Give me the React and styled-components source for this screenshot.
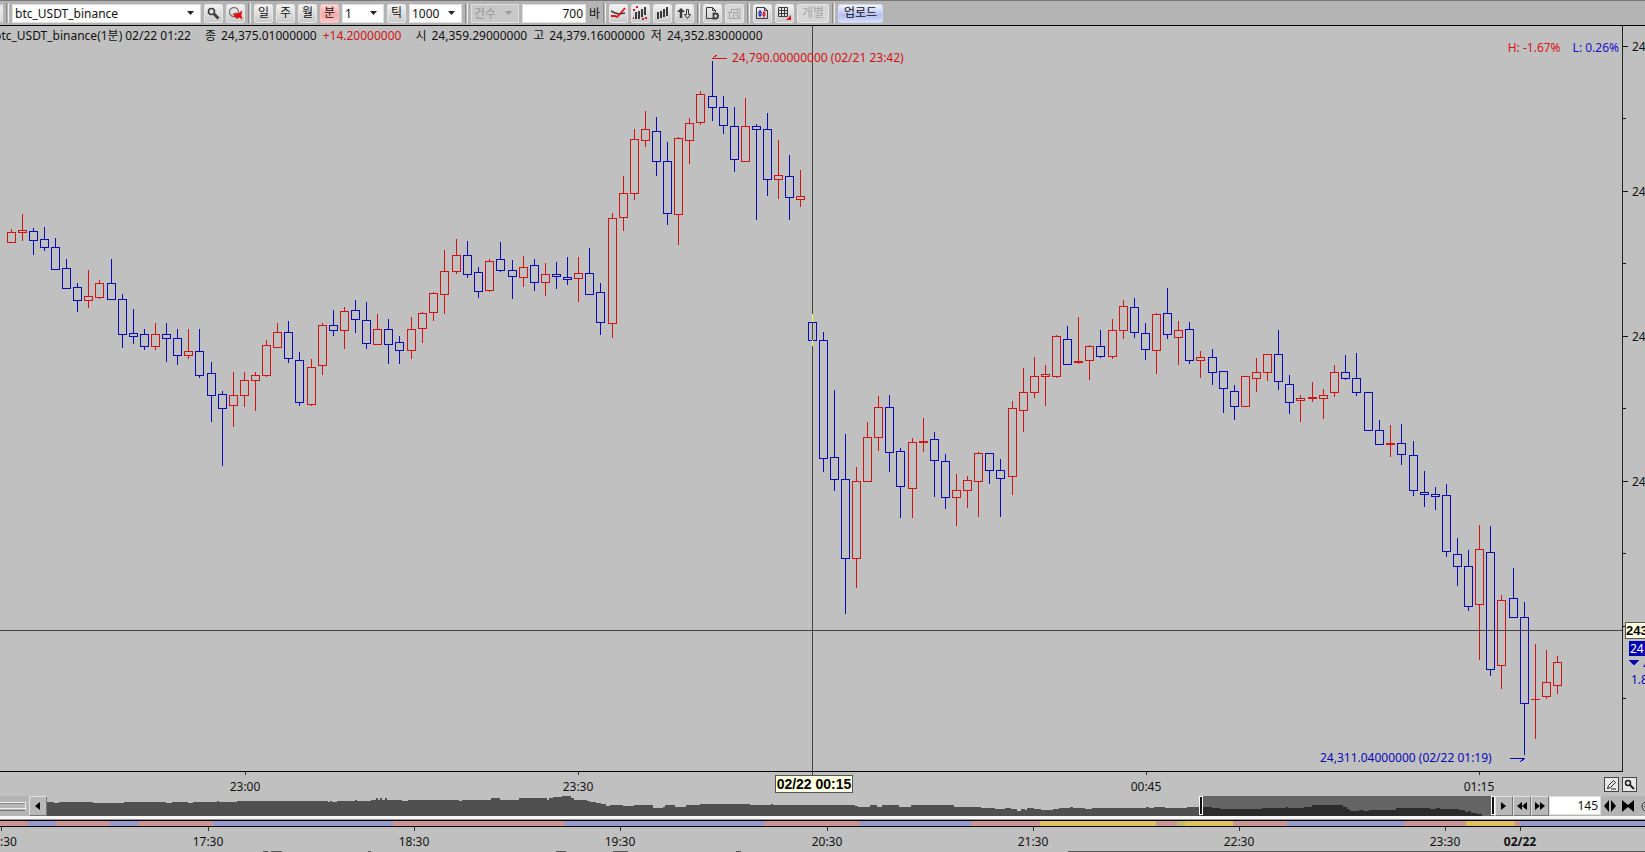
import React from 'react';
import styled, { createGlobalStyle, css } from 'styled-components';

const GlobalStyle = createGlobalStyle`
  * {
    box-sizing: border-box;
  }

  body {
    margin: 0;
    background: #c0c0c0;
    overflow: hidden;
  }

  body, button, input, select {
    font-family: 'Noto Sans', 'Noto Sans CJK KR', sans-serif;
    font-size: 12px;
    color: #111;
  }
`;

const RED = '#d01414';
const BLUE = '#0a0ab4';

// Page and toolbar
const Page = styled.main`
  display: flex;
  flex-direction: column;
  min-height: 100vh;
  background: #c0c0c0;
`;

const Toolbar = styled.header`
  display: flex;
  align-items: center;
  gap: 3px;
  height: 26px;
  border-top: 1px solid #77757a;
  border-bottom: 1px solid #000;
  background: #b4b4b4;
  overflow: hidden;
`;

const Divider = styled.span`
  flex: none;
  width: 3px;
  height: 20px;
  border-left: 1px solid #8c8c8c;
  border-right: 1px solid #f0f0f0;
`;

const ToolButton = styled.button`
  flex: none;
  display: flex;
  align-items: center;
  justify-content: center;
  width: ${(p) => p.$width || 19}px;
  height: 19px;
  padding: 0;
  border: 1px solid #e6e6e6;
  border-radius: 2px;
  background: linear-gradient(#f2f2f2, #dcdcdc 55%, #cacaca);
  line-height: 16px;

  ${(p) => p.$tone === 'active' && css`
    background: linear-gradient(#ffd6d6, #f5a8a8 60%, #ffc8c8);
    border-color: #f0c4c4;
  `}

  ${(p) => p.$tone === 'upload' && css`
    background: linear-gradient(#f4f6ff, #b4bef0 60%, #d4dcff);
    border-color: #d0d8f4;
  `}

  &:disabled {
    color: #a6a6a6;
    background: #d6d6d6;
  }
`;

const SelectBox = styled.label`
  flex: none;
  display: grid;
  align-items: center;
  width: ${(p) => p.$width}px;
  height: 19px;
  border: 1px solid #dedede;
  background: ${(p) => (p.$disabled ? '#c8c8c8' : '#fff')};

  > * {
    grid-area: 1 / 1;
  }

  select {
    width: 100%;
    height: 17px;
    padding: 0 2px;
    border: 0;
    background: transparent;
    appearance: none;
    line-height: 17px;
  }

  select:disabled {
    color: #999;
    opacity: 1;
  }

  svg {
    justify-self: end;
    margin-right: 6px;
    fill: ${(p) => (p.$disabled ? '#999' : '#222')};
    pointer-events: none;
  }
`;

const NumberInput = styled.input`
  flex: none;
  width: ${(p) => p.$width}px;
  height: 19px;
  padding: 0 2px;
  border: 1px solid #dedede;
  background: #fff;
  text-align: right;
`;

const UnitText = styled.label`
  flex: none;
`;

// Chart
const ChartArea = styled.section`
  display: grid;
  grid-template-columns: minmax(0, 1fr) 22px;
`;

const Plot = styled.div`
  display: grid;
  border-right: 1px solid #222;
  border-bottom: 1px solid #000;
  overflow: hidden;

  > * {
    grid-area: 1 / 1;
  }
`;

const Drawing = styled.svg`
  display: block;
  width: 100%;
  height: ${(p) => p.$height}px;
  shape-rendering: crispEdges;
`;

const QuoteLine = styled.div`
  display: flex;
  align-self: start;
  margin-left: -6px;
  line-height: 20px;
  white-space: nowrap;
`;

const Quote = styled.span`
  display: flex;
  gap: 5px;
  margin-right: ${(p) => p.$after || 6}px;
  color: ${(p) => p.$color || '#111'};
`;

const RangeInfo = styled.div`
  display: flex;
  gap: 12px;
  align-self: start;
  justify-self: end;
  padding: 12px 3px 0 0;
  line-height: 20px;
`;

const RangeText = styled.span`
  color: ${(p) => p.$color};
`;

const TimeRow = styled.div`
  display: grid;
  grid-template-columns: minmax(0, 1fr) auto;
`;

// Drawing and zoom buttons at the right end of the time scale
const TimeTools = styled.div`
  display: flex;
  gap: 3px;
  padding: 5px 8px 0 0;
`;

const SmallButton = styled.button`
  display: flex;
  align-items: center;
  justify-content: center;
  width: 15px;
  height: 15px;
  padding: 0;
  border: 1px solid #444;
  background: #e8e8e8;
`;

// Range navigator
const Navigator = styled.div`
  display: flex;
  height: 20px;
  background: #b4b4b4;
  overflow: hidden;
`;

const Grip = styled.div`
  flex: none;
  width: 26px;
  height: 9px;
  margin: 6px 3px 0 0;
  border: 1px solid #f0f0f0;
  border-left: 0;
  border-bottom-color: #777;

  &::after {
    content: '';
    display: block;
    height: 4px;
    border-top: 1px solid #888;
    border-bottom: 1px solid #f0f0f0;
  }
`;

const NavButton = styled.button`
  flex: none;
  display: flex;
  align-items: center;
  justify-content: center;
  width: ${(p) => p.$width || 18}px;
  padding: 0;
  border: 1px solid #e0e0e0;
  border-right-color: #777;
  border-bottom-color: #777;
  background: #b8b8b8;
`;

const NavTrack = styled.div`
  flex: 1;
  min-width: 0;
  background: #c0c0c0;
`;

const ZoomTools = styled.div`
  flex: none;
  display: flex;
  width: 44px;
  overflow: hidden;
`;

const ZoomButton = styled.button`
  flex: none;
  display: flex;
  align-items: center;
  justify-content: center;
  width: 18px;
  padding: 0;
  border: 0;
  background: transparent;
`;

const Splitter = styled.div`
  height: 4px;
  border-top: 3px solid #f6f6f6;
  background: #999;
`;

// dir, high, body top, body bottom, low
const candles = [
  ['r', 229, 232, 242, 242], ['r', 214, 230, 232, 240], ['b', 228, 231, 240, 254], ['b', 227, 239, 247, 250],
  ['b', 238, 247, 269, 269], ['b', 259, 268, 288, 288], ['b', 283, 287, 300, 311], ['r', 270, 296, 300, 307],
  ['r', 280, 283, 297, 298], ['b', 259, 283, 299, 299], ['b', 294, 299, 334, 347], ['b', 309, 333, 336, 343],
  ['b', 329, 334, 346, 349], ['r', 323, 334, 346, 349], ['b', 323, 334, 338, 361], ['b', 329, 338, 355, 364],
  ['r', 329, 351, 355, 358], ['b', 329, 351, 375, 377], ['b', 362, 373, 395, 421], ['b', 391, 394, 408, 465],
  ['r', 372, 395, 405, 426], ['r', 372, 380, 395, 406], ['r', 372, 375, 380, 410], ['r', 340, 345, 375, 376],
  ['r', 323, 332, 347, 347], ['b', 321, 332, 358, 362], ['b', 352, 360, 402, 405], ['r', 359, 367, 404, 405],
  ['r', 323, 325, 365, 374], ['b', 310, 325, 330, 335], ['r', 307, 311, 330, 348], ['b', 300, 310, 319, 332],
  ['b', 302, 320, 343, 348], ['r', 314, 329, 344, 344], ['b', 319, 329, 344, 363], ['b', 336, 342, 350, 363],
  ['r', 317, 329, 350, 358], ['r', 312, 313, 328, 342], ['r', 292, 293, 312, 320], ['r', 250, 271, 294, 313],
  ['r', 239, 255, 271, 273], ['b', 241, 255, 274, 277], ['b', 267, 272, 291, 297], ['r', 259, 261, 290, 291],
  ['b', 242, 259, 270, 271], ['b', 260, 270, 276, 298], ['r', 256, 267, 277, 286], ['b', 259, 265, 282, 290],
  ['r', 263, 274, 282, 295], ['b', 262, 274, 276, 288], ['b', 257, 277, 279, 284], ['r', 257, 273, 278, 301],
  ['b', 248, 273, 294, 294], ['b', 283, 292, 322, 334], ['r', 213, 218, 323, 337], ['r', 176, 193, 217, 230],
  ['r', 129, 139, 193, 199], ['r', 111, 129, 140, 146], ['b', 117, 131, 161, 175], ['b', 142, 161, 213, 224],
  ['r', 137, 138, 214, 244], ['r', 118, 123, 140, 163], ['r', 91, 94, 122, 124], ['b', 61, 96, 107, 120],
  ['b', 96, 107, 125, 133], ['b', 107, 126, 159, 171], ['r', 98, 126, 161, 161], ['b', 124, 126, 129, 219],
  ['b', 113, 129, 179, 195], ['r', 140, 175, 179, 198], ['b', 155, 176, 197, 219], ['r', 170, 196, 199, 206],
  ['b', 322, 322, 340, 340], ['b', 332, 340, 458, 471], ['b', 390, 457, 479, 490], ['b', 434, 479, 558, 613],
  ['r', 467, 481, 558, 587], ['r', 422, 437, 481, 481], ['r', 396, 407, 437, 450], ['b', 395, 407, 452, 471],
  ['b', 448, 451, 486, 517], ['r', 438, 442, 488, 517], ['r', 418, 441, 442, 451], ['b', 432, 439, 460, 496],
  ['b', 454, 461, 497, 508], ['r', 474, 490, 497, 525], ['r', 476, 480, 490, 507], ['r', 452, 453, 481, 516],
  ['b', 453, 453, 470, 483], ['b', 459, 470, 478, 516], ['r', 401, 408, 476, 494], ['r', 368, 392, 410, 431],
  ['r', 357, 376, 392, 397], ['r', 365, 374, 376, 405], ['r', 335, 336, 376, 377], ['b', 326, 339, 364, 364],
  ['r', 317, 361, 362, 363], ['r', 345, 346, 360, 379], ['b', 330, 346, 356, 357], ['r', 319, 330, 356, 358],
  ['r', 300, 306, 330, 338], ['b', 298, 307, 332, 337], ['b', 323, 333, 349, 359], ['r', 313, 314, 350, 373],
  ['b', 288, 313, 334, 338], ['r', 321, 330, 337, 364], ['b', 322, 329, 360, 363], ['r', 351, 357, 360, 377],
  ['b', 349, 357, 372, 384], ['b', 371, 371, 388, 412], ['b', 385, 391, 406, 419], ['r', 376, 376, 406, 406],
  ['r', 358, 372, 378, 391], ['r', 354, 354, 372, 380], ['b', 330, 354, 381, 389], ['b', 375, 384, 402, 413],
  ['r', 395, 398, 400, 421], ['r', 382, 397, 398, 401], ['r', 389, 395, 398, 418], ['r', 365, 372, 392, 396],
  ['b', 355, 372, 378, 379], ['b', 353, 378, 392, 395], ['b', 392, 392, 430, 430], ['b', 420, 430, 444, 444],
  ['r', 425, 443, 444, 456], ['b', 424, 443, 454, 464], ['b', 441, 455, 490, 495], ['b', 471, 492, 494, 506],
  ['b', 487, 494, 496, 509], ['b', 484, 495, 551, 556], ['b', 538, 554, 566, 585], ['b', 550, 566, 606, 610],
  ['r', 525, 549, 604, 659], ['b', 526, 552, 669, 675], ['r', 595, 600, 665, 688], ['b', 568, 598, 617, 617],
  ['b', 602, 617, 703, 754], ['r', 644, 699, 699, 738], ['r', 650, 682, 696, 698], ['r', 656, 662, 685, 693],
];

const TOP = 26; // toolbar height, the candle values count from the window top
const candleX = (i) => Math.floor((11.5 + Math.floor((i * 100) / 9)) * 1.0011);

const priceTicks = [
  { y: 46, label: '24' }, { y: 118 }, { y: 191, label: '24' }, { y: 263 }, { y: 336, label: '24' },
  { y: 408 }, { y: 481, label: '24' }, { y: 553 }, { y: 626 }, { y: 698 },
];

const timeTicks = [[245, '23:00'], [578, '23:30'], [1146, '00:45'], [1479, '01:15']];

const sessionTicks = [
  [208, '17:30'], [414, '18:30'], [620, '19:30'], [827, '20:30'],
  [1033, '21:30'], [1239, '22:30'], [1445, '23:30'], [1520, '02/22'],
];

const sessions = [
  [0, 28, 'r'], [28, 56, 'b'], [56, 110, 'r'], [110, 138, 'b'], [138, 213, 'r'], [213, 393, 'b'],
  [393, 565, 'r'], [565, 764, 'b'], [764, 860, 'r'], [860, 971, 'b'], [971, 1040, 'r'], [1040, 1156, 'y'],
  [1156, 1177, 'r'], [1177, 1185, 'g'], [1185, 1233, 'y'], [1233, 1287, 'r'], [1287, 1404, 'b'],
  [1404, 1466, 'r'], [1466, 1515, 'y'], [1515, 1520, 'r'], [1520, 4000, 'b'],
];
const sessionColors = { r: '#cc9696', b: '#9898cc', y: '#dfc25c', g: '#bdbb70' };

// x, top of the navigator silhouette
const navShape = [
  [47, 802], [54, 803], [59, 802], [93, 803], [124, 802], [166, 803], [172, 802], [188, 803], [193, 802],
  [217, 801], [219, 802], [237, 801], [328, 802], [330, 801], [332, 802], [337, 801], [355, 800], [357, 801],
  [371, 800], [376, 798], [378, 800], [380, 798], [382, 800], [385, 798], [387, 800], [402, 801], [408, 800],
  [459, 801], [462, 800], [491, 798], [500, 800], [519, 798], [547, 800], [549, 798], [553, 797], [562, 796],
  [571, 798], [574, 800], [587, 801], [590, 802], [596, 803], [601, 804], [606, 806], [610, 805], [623, 806],
  [634, 805], [653, 808], [663, 807], [665, 805], [675, 807], [686, 805], [700, 804], [750, 805], [771, 804],
  [773, 805], [855, 806], [858, 807], [870, 805], [877, 807], [882, 805], [899, 807], [911, 805], [954, 807],
  [981, 808], [995, 809], [1005, 808], [1011, 809], [1017, 811], [1021, 809], [1025, 810], [1027, 808],
  [1034, 809], [1041, 810], [1053, 809], [1059, 808], [1070, 807], [1073, 808], [1085, 809], [1092, 808],
  [1146, 807], [1149, 808], [1154, 807], [1165, 808], [1187, 807], [1212, 808], [1220, 809], [1262, 808],
  [1286, 807], [1288, 808], [1304, 807], [1312, 805], [1343, 807], [1347, 809], [1350, 811], [1359, 810],
  [1363, 811], [1369, 810], [1396, 808], [1430, 809], [1436, 808], [1440, 809], [1459, 810], [1465, 812],
  [1468, 811], [1471, 813], [1477, 814], [1482, 816],
];
const navPath = navShape.reduce(
  (d, [x, y], i) => `${d} H${x - 47} V${y - 796} ${i === navShape.length - 1 ? 'V20 Z' : ''}`,
  'M0 20'
);

const Arrow = () => (
  <svg width="7" height="4"><path d="M0 0h7L3.5 4z" /></svg>
);

const Combo = ({ width, value, label, disabled }) => (
  <SelectBox $width={width} $disabled={disabled}>
    <select aria-label={label} disabled={disabled} defaultValue={value}>
      <option>{value}</option>
    </select>
    <Arrow />
  </SelectBox>
);

const Icon = ({ children }) => (
  <svg width="15" height="15" viewBox="0 0 15 15" fill="none" stroke="#3a3a3a">{children}</svg>
);

const SearchIcon = () => (
  <Icon>
    <circle cx="5.5" cy="5.5" r="3" strokeWidth="1.6" />
    <path d="M8 8l4.5 4.5" strokeWidth="2.6" />
  </Icon>
);

const SearchStarIcon = () => (
  <Icon>
    <circle cx="6" cy="6" r="4.500" stroke="#777" strokeWidth="1.3" />
    <path d="M5 8l4-1 1 1 4-3-1 4 1 4-3-2-2 2-1-2-2 0 1-2z" fill="#e00c14" stroke="#e00c14" strokeWidth=".6" />
  </Icon>
);

const TrendIcon = () => (
  <Icon>
    <path d="M0 5l4 2 4 1 6-1" strokeWidth="1.5" />
    <path d="M0 10h4l2 1 3-3 5-6" stroke="#d8141c" strokeWidth="1.8" />
  </Icon>
);

const BarsDotIcon = () => (
  <Icon>
    <path d="M3 6v7M6 5v8M9 3v8M12 1v8" strokeWidth="2" />
    <path d="M0 4h2M3 1h2M9 13h2M12 12h2M0 12h1" stroke="#d8141c" strokeWidth="2" />
  </Icon>
);

const BarsIcon = () => (
  <Icon>
    <path d="M3 6v7M6 5v7M9 3v8M12 1v9" strokeWidth="2" />
  </Icon>
);

const UpDownIcon = () => (
  <Icon>
    <path d="M4 12V5" strokeWidth="2.5" />
    <path d="M0 6l4-4 4 4z" fill="#3a3a3a" stroke="none" />
    <path d="M9.5 3.500h2v5h2l-3 4-3-4h2z" />
  </Icon>
);

const PageIcon = ({ muted }) => (
  <svg width="15" height="15" fill="none" stroke={muted ? '#a4a4a4' : '#3a3a3a'}>
    {muted ? (
      <path d="M2.500 6.500v6h7M1 6.500h4M4.500 6V3.500h6v2M9 4l4-2M6.500 6.500h6v6h-6zM8 9h3v3M12 5l2-1" />
    ) : (
      <>
        <path d="M8 12.500H1.500v-11h6l3 3V6M7.500 1.500v3h3" />
        <path d="M8.500 7.500h2a2.500 2.500 0 010 5h-2z" strokeWidth="1.8" />
      </>
    )}
  </svg>
);

const CandlePageIcon = () => (
  <Icon>
    <path d="M1.500 1.500h8l3 3v8h-11zM9.500 1.500v3h3" />
    <path d="M5 4v7M4 5.500h2v4H4z" stroke="#1420c8" />
    <path d="M9 5v7M8 6.500h2v3H8z" stroke="#d8141c" />
  </Icon>
);

const GridIcon = () => (
  <Icon>
    <path d="M1.500 1.500h9v9h-9zM4.500 1v10M7.500 1v10M1 4.500h10M1 7.500h10" />
    <path d="M9 14h5V9z" fill="#d8141c" stroke="none" />
  </Icon>
);

const Triangles = ({ d, width = 12 }) => (
  <svg width={width} height="12"><path d={d} fill="#000" /></svg>
);

const Candle = ({ x, data: [dir, high, top, bottom, low] }) => {
  const color = dir === 'r' ? RED : BLUE;
  const cx = x + 0.5;
  return (
    <g stroke={color} fill="none">
      {high < top && <path d={`M${cx} ${high - TOP}V${top - TOP}`} />}
      {low > bottom && <path d={`M${cx} ${bottom - TOP}V${low - TOP + 1}`} />}
      {top === bottom ? (
        <path d={`M${x - 4} ${top - TOP + 0.5}h9`} />
      ) : (
        <rect x={x - 3.5} y={top - TOP + 0.5} width="8" height={bottom - top} />
      )}
    </g>
  );
};

const PriceChart = () => (
  <Drawing $height={745} role="img" aria-label="btc_USDT_binance">
    {candles.map((c, i) => <Candle key={i} x={candleX(i)} data={c} />)}
    {/* crosshair */}
    <path d="M812.500 0V745M0 604.500H4000" stroke="#444" />
    <path d="M812.500 288V296M812.500 314V320" stroke="#f4f450" />
    <g stroke={RED} fill="none">
      <path d="M712 32.500h15M713 32l4-3" />
    </g>
    <text x="732" y="36" fill={RED}>24,790.00000000 (02/21 23:42)</text>
    <g stroke={BLUE} fill="none">
      <path d="M1510 732.500h15M1524 733l-4 3" />
    </g>
    <text x="1320" y="736" fill={BLUE}>24,311.04000000 (02/22 01:19)</text>
  </Drawing>
);

const PriceAxis = () => (
  <Drawing $height={746}>
    {priceTicks.map(({ y, label }) => (
      <g key={y}>
        <path d={`M0 ${y - TOP + 0.5}h${label ? 5 : 3}`} stroke="#111" />
        {label && <text x="9" y={y - TOP + 5} fill="#111">{label}</text>}
      </g>
    ))}
    <rect x="2.500" y="596.500" width="40" height="16" fill="#ffffe1" stroke="#555" />
    <text x="3" y="609" fontFamily="Liberation Sans" fontWeight="bold" fontSize="13">243</text>
    <rect x="6" y="615" width="40" height="15" fill="#0000b4" />
    <text x="7" y="627" fill="#fff">24</text>
    <path d="M6 634h10l-5 6z" fill={BLUE} />
    <text x="20" y="643" fill={BLUE}>4</text>
    <text x="8" y="658" fill={BLUE}>1.8</text>
  </Drawing>
);

const TimeAxis = () => (
  <Drawing $height={24}>
    {timeTicks.map(([x, label]) => (
      <g key={x}>
        <path d={`M${x + 0.5} 0v3`} stroke="#333" />
        <text x={x} y="19" fill="#111" textAnchor="middle">{label}</text>
      </g>
    ))}
    <path d="M812.500 0v4" stroke="#444" />
    <rect x="775.500" y="3.500" width="77" height="17" fill="#ffffe1" stroke="#555" />
    <text x="814" y="17" textAnchor="middle" fontFamily="Liberation Sans" fontWeight="bold" fontSize="14">
      02/22 00:15
    </text>
  </Drawing>
);

const SessionAxis = () => (
  <Drawing $height={32}>
    {sessions.map(([from, to, kind]) => (
      <rect key={from} x={from} y="1" width={to - from} height="5" fill={sessionColors[kind]} />
    ))}
    <path d="M0 .5H4000M0 6.500H4000" stroke="#000" />
    <path d="M1.500 7v4" stroke="#333" />
    <text x="0" y="26" fill="#111">:30</text>
    {sessionTicks.map(([x, label]) => (
      <g key={x}>
        <path d={`M${x + 0.5} 7v4`} stroke="#333" />
        <text x={x} y="26" fill="#111" textAnchor="middle" fontWeight={label === '02/22' ? 'bold' : 'normal'}>
          {label}
        </text>
      </g>
    ))}
    <path d="M263 31.500h5M271 31.500h11M368 31.500h3M556 31.500h10M613 31.500h15M736 31.500h5M1068 31.500H4000" stroke="#555" />
  </Drawing>
);

const App = () => {
  return (
    <Page>
      <GlobalStyle />
      <Toolbar>
        <ToolButton $width={3} aria-label="이전" />
        <Divider />
        <Combo width={189} value="btc_USDT_binance" label="종목" />
        <ToolButton aria-label="검색"><SearchIcon /></ToolButton>
        <ToolButton aria-label="관심"><SearchStarIcon /></ToolButton>
        <Divider />
        <ToolButton>일</ToolButton>
        <ToolButton>주</ToolButton>
        <ToolButton>월</ToolButton>
        <ToolButton $tone="active">분</ToolButton>
        <Combo width={42} value="1" label="분 단위" />
        <ToolButton>틱</ToolButton>
        <Combo width={53} value="1000" label="틱 단위" />
        <Divider />
        <Combo width={48} value="건수" label="기준" disabled />
        <NumberInput id="bars" $width={64} defaultValue="700" />
        <UnitText htmlFor="bars">바</UnitText>
        <Divider />
        <ToolButton aria-label="추세"><TrendIcon /></ToolButton>
        <ToolButton aria-label="신호"><BarsDotIcon /></ToolButton>
        <ToolButton aria-label="거래량"><BarsIcon /></ToolButton>
        <ToolButton aria-label="정렬"><UpDownIcon /></ToolButton>
        <Divider />
        <ToolButton aria-label="데이터"><PageIcon /></ToolButton>
        <ToolButton aria-label="복사" disabled><PageIcon muted /></ToolButton>
        <Divider />
        <ToolButton aria-label="차트"><CandlePageIcon /></ToolButton>
        <ToolButton aria-label="표"><GridIcon /></ToolButton>
        <ToolButton $width={32} disabled>개별</ToolButton>
        <Divider />
        <ToolButton $width={45} $tone="upload">업로드</ToolButton>
      </Toolbar>

      <ChartArea>
        <Plot>
          <PriceChart />
          <QuoteLine>
            <Quote $after={3}>btc_USDT_binance(1분)</Quote>
            <Quote $after={14}>02/22 01:22</Quote>
            <Quote><span>종</span>24,375.01000000</Quote>
            <Quote $color={RED} $after={14}>+14.20000000</Quote>
            <Quote><span>시</span>24,359.29000000</Quote>
            <Quote><span>고</span>24,379.16000000</Quote>
            <Quote><span>저</span>24,352.83000000</Quote>
          </QuoteLine>
          <RangeInfo>
            <RangeText $color="#dc1414">H: -1.67%</RangeText>
            <RangeText $color="#1414c8">L: 0.26%</RangeText>
          </RangeInfo>
        </Plot>
        <PriceAxis />
      </ChartArea>

      <TimeRow>
        <TimeAxis />
        <TimeTools>
          <SmallButton aria-label="그리기">
            <svg width="11" height="11" fill="none" stroke="#222"><path d="M1.500 9.500l1-3 5-5 2 2-5 5zM5 10h5" /></svg>
          </SmallButton>
          <SmallButton aria-label="확대">
            <svg width="11" height="11" fill="none" stroke="#222">
              <circle cx="4" cy="4" r="2.500" strokeWidth="1.500" />
              <path d="M6 6l4 4" strokeWidth="2" />
            </svg>
          </SmallButton>
        </TimeTools>
      </TimeRow>

      <Navigator>
        <Grip />
        <NavButton aria-label="왼쪽"><Triangles d="M3 6l5-4v8z" /></NavButton>
        <NavTrack>
          <Drawing $height={20} viewBox="0 0 1448 20" preserveAspectRatio="none">
            <rect x="1154" y="0" width="293" height="20" fill="#646464" />
            <path d={navPath} fill="#505050" />
            <svg x="1154" width="293" height="20" viewBox="1154 0 293 20">
              <path d={navPath} fill="#2b2b2b" />
            </svg>
            <rect x="1152.500" y="0.500" width="3" height="18" fill="#111" stroke="#fff" />
            <rect x="1444.500" y="0.500" width="3" height="18" fill="#111" stroke="#fff" />
          </Drawing>
        </NavTrack>
        <NavButton aria-label="오른쪽"><Triangles d="M3 2l5 4-5 4z" /></NavButton>
        <NavButton aria-label="처음"><Triangles d="M1 6l5-4v8zM6 6l5-4v8z" /></NavButton>
        <NavButton aria-label="끝"><Triangles d="M1 2l5 4-5 4zM6 2l5 4-5 4z" /></NavButton>
        <NumberInput $width={52} aria-label="표시 개수" defaultValue="145" />
        <ZoomTools>
          <ZoomButton aria-label="넓게"><Triangles d="M5 0v12L0 6zM7 0v12l5-6z" /></ZoomButton>
          <ZoomButton aria-label="좁게"><Triangles d="M0 0v12l6-5 6 5V0L6 5z" /></ZoomButton>
          <ZoomButton aria-label="축소">
            <svg width="11" height="11" fill="none" stroke="#333"><circle cx="5.500" cy="5.500" r="4.500" /><path d="M3 5.500h5" /></svg>
          </ZoomButton>
        </ZoomTools>
      </Navigator>
      <Splitter />
      <SessionAxis />
    </Page>
  );
};

export default App;
